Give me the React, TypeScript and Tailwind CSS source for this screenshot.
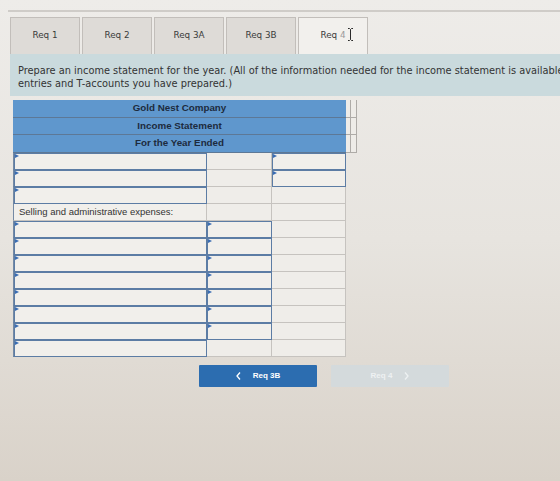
import React from "react";

type Cell = "in" | "plain" | "label";

const rows: Cell[][] = [
  ["in", "plain", "in"],
  ["in", "plain", "in"],
  ["in", "plain", "plain"],
  ["label", "plain", "plain"],
  ["in", "in", "plain"],
  ["in", "in", "plain"],
  ["in", "in", "plain"],
  ["in", "in", "plain"],
  ["in", "in", "plain"],
  ["in", "in", "plain"],
  ["in", "in", "plain"],
  ["in", "plain", "plain"],
];

const tabs = ["Req 1", "Req 2", "Req 3A", "Req 3B"];

function Marker() {
  return (
    <span className="absolute left-[1px] top-[1px] h-0 w-0 border-y-[2.5px] border-l-[4px] border-y-transparent border-l-[#3a6db3]" />
  );
}

function BodyCell({ kind, col }: { kind: Cell; col: number }) {
  const edge = col === 0 ? "border-l border-l-[#7489a4]" : "";
  if (kind === "in") {
    return (
      <div
        className={`relative h-[17px] border-r border-b border-[#5c7ca4] bg-[#f1efeb] shadow-[inset_1px_1px_0_#5c7ca4] ${edge}`}
      >
        <Marker />
      </div>
    );
  }
  if (kind === "label") {
    return (
      <div
        className={`flex h-[17px] items-center whitespace-nowrap border-r border-b border-[#c6c3bf] bg-[#f1efeb] pl-[5px] text-[9.5px] text-[#333] ${edge}`}
        style={{ fontFamily: '"Liberation Sans", Arial, sans-serif' }}
      >
        Selling and administrative expenses:
      </div>
    );
  }
  return <div className={`h-[17px] border-r border-b border-[#c6c3bf] bg-[#efede9] ${edge}`} />;
}

function HeaderRow({ text, h }: { text: string; h: string }) {
  return (
    <div className="flex">
      <div
        className={`flex w-[333px] items-center justify-center border-b border-[#5d7896] bg-[#5f97cd] text-[9.8px] font-bold text-[#1d2b3d] ${h}`}
        style={{ fontFamily: '"Liberation Sans", Arial, sans-serif' }}
      >
        {text}
      </div>
      <div className={`w-[5px] border-r border-b border-[#aeaba7] bg-[#eeece8] ${h}`} />
      <div className={`w-[6px] border-r border-b border-[#aeaba7] bg-[#eeece8] ${h}`} />
    </div>
  );
}

function IBeam() {
  return (
    <svg
      className="absolute left-[27px] top-[-2px]"
      width="7"
      height="15"
      viewBox="0 0 7 15"
      fill="none"
      stroke="#2b2b2b"
      strokeWidth="1"
    >
      <path d="M1 1.5 H2.5 L3.5 2.5 L4.5 1.5 H6 M3.5 2.5 V12.5 M1 13.5 H2.5 L3.5 12.5 L4.5 13.5 H6" />
    </svg>
  );
}

export default function App() {
  const ui = { fontFamily: '"DejaVu Sans", Verdana, sans-serif' };
  return (
    <div
      className="relative h-[481px] w-[560px] overflow-hidden bg-gradient-to-b from-[#eeece9] via-[#e7e4df] to-[#d9d2c9]"
      style={ui}
    >
      <div className="ml-[8px] mt-[10px] h-[2px] bg-[#cfccc8]" />

      {/* requirement tabs */}
      <div className="ml-[10px] mt-[5px] flex gap-[2px]">
        {tabs.map((t) => (
          <div
            key={t}
            className="flex h-[37px] w-[70px] items-center justify-center border border-b-0 border-[#c2beba] bg-[#dedbd7] text-[8.8px] text-[#3b3b3b]"
          >
            {t}
          </div>
        ))}
        <div className="flex h-[37px] w-[70px] items-center justify-center border border-b-0 border-[#c2beba] bg-[#f2f0ed] text-[8.8px] text-[#3b3b3b]">
          <span className="relative">
            Req <span className="text-[#9a9a9a]">4</span>
            <IBeam />
          </span>
        </div>
      </div>

      {/* instructions */}
      <div className="ml-[10px] w-[700px] bg-[#cadadd] pb-[6px] pl-[8px] pt-[10px] text-[9.8px] leading-[13px] text-[#333]">
        Prepare an income statement for the year. (All of the information needed for the income statement is available in the journal
        <br />
        entries and T-accounts you have prepared.)
      </div>

      {/* income statement worksheet */}
      <div className="ml-[13px] mt-[4px] w-[345px]">
        <HeaderRow text="Gold Nest Company" h="h-[18px]" />
        <HeaderRow text="Income Statement" h="h-[17px]" />
        <HeaderRow text="For the Year Ended" h="h-[18px]" />
        <div className="grid w-[333px] grid-cols-[194px_65px_74px]">
          {rows.map((r, i) =>
            r.map((k, j) => <BodyCell key={`${i}-${j}`} kind={k} col={j} />)
          )}
        </div>
      </div>

      {/* navigation */}
      <div
        className="ml-[199px] mt-[8px] flex gap-[14px] text-[8px] font-bold"
        style={{ fontFamily: '"Liberation Sans", Arial, sans-serif' }}
      >
        <div className="flex h-[22px] w-[118px] items-center justify-center gap-[12px] rounded-[1px] bg-[#2c6db0] text-white">
          <svg width="5" height="8" viewBox="0 0 5 8" fill="none" stroke="white" strokeWidth="1.3">
            <path d="M4 0.5 L1 4 L4 7.5" />
          </svg>
          <span>Req 3B</span>
        </div>
        <div className="flex h-[22px] w-[118px] items-center justify-center gap-[12px] rounded-[1px] bg-[#d4dadc] text-[#eef1f2]">
          <span>Req 4</span>
          <svg width="5" height="8" viewBox="0 0 5 8" fill="none" stroke="#eef1f2" strokeWidth="1.3">
            <path d="M1 0.5 L4 4 L1 7.5" />
          </svg>
        </div>
      </div>
    </div>
  );
}
